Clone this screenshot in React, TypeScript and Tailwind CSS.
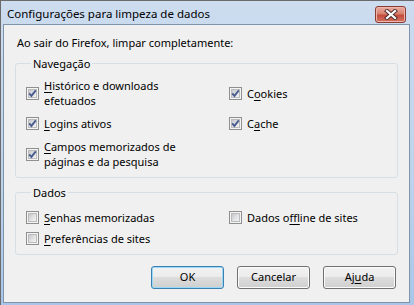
import React from 'react';

const FONT = "font-['Noto_Sans',sans-serif]";

const CheckBox = ({ checked }: { checked?: boolean }) => (
  <div className="w-[13px] h-[13px] shrink-0 border border-[#8f8f8f] bg-[#f4f4f4] p-px">
    <div className="w-full h-full border border-[#bcbcbc] bg-[linear-gradient(135deg,#c4c6ca_0%,#e2e3e5_55%,#f3f3f3_100%)] flex items-center justify-center">
      {checked && (
        <svg width="9" height="9" viewBox="0 0 9 9" className="-m-px">
          <path d="M1.2 4.4 L3.4 6.9 L7.8 1.4" fill="none" stroke="#4a5d90" strokeWidth="1.9" />
        </svg>
      )}
    </div>
  </div>
);

// label with an access key underlined
const Label = ({ pre = '', k, post }: { pre?: string; k: string; post: string }) => (
  <span>
    {pre}
    <span className="underline underline-offset-[2px]">{k}</span>
    {post}
  </span>
);

const Option = ({ checked, children }: { checked?: boolean; children: React.ReactNode }) => (
  <div className="flex items-center gap-[5px]">
    <CheckBox checked={checked} />
    <div className="leading-[15px]">{children}</div>
  </div>
);

const Button = ({ children, primary }: { children: React.ReactNode; primary?: boolean }) => (
  <button
    className={`w-[73px] h-[23px] rounded-[3px] border text-[11px] text-black bg-[linear-gradient(to_bottom,#f2f2f2_0%,#ebebeb_50%,#dddddd_50%,#cfcfcf_100%)] ${
      primary
        ? 'border-[#3c7fb1] shadow-[inset_0_0_0_1px_#9ad9f6]'
        : 'border-[#707070] shadow-[inset_0_0_0_1px_#fbfbfb]'
    }`}
  >
    {children}
  </button>
);

const CloseButton = () => (
  <div className="w-[31px] h-[17px] mt-[5px] mr-[4px] self-start rounded-[3px] border border-[#8b3a34] bg-[linear-gradient(to_bottom,#e9aca2_0%,#d7806f_45%,#c44c3c_55%,#d27260_100%)] shadow-[inset_0_0_0_1px_#ecb6ab] flex items-center justify-center">
    <svg width="14" height="11" viewBox="0 0 14 11">
      <path d="M3 2 L11 9 M11 2 L3 9" stroke="#4b2a2a" strokeWidth="4" strokeLinecap="square" />
      <path d="M3 2 L11 9 M11 2 L3 9" stroke="#ffffff" strokeWidth="2.2" strokeLinecap="square" />
    </svg>
  </div>
);

export default function App() {
  return (
    <div className={`${FONT} w-[414px] h-[305px] flex flex-col border-l border-t border-[#6b6b6b] bg-[linear-gradient(to_bottom,#cddcef_0%,#bcd2ea_60%,#a9c6e8_100%)] pl-[2px] pr-[4px] pb-[2px] text-[11px] text-black`}>
      {/* title bar */}
      <div className="h-[23px] flex items-center justify-between">
        <span className="pl-[4px] pt-px leading-[15px] text-[11.5px] text-black">Configurações para limpeza de dados</span>
        <CloseButton />
      </div>

      {/* client area */}
      <div className="flex-1 border border-[#7f93ad] bg-[#f0f0f0] flex flex-col">
        <p className="pl-[13px] pt-[10px] leading-[15px]">Ao sair do Firefox, limpar completamente:</p>

        <fieldset className="w-[383px] ml-[11px] mt-[6px] border border-[#d5dfe5] rounded-[3px] pl-[10px] pt-[7px] pb-[8px]">
          <legend className="ml-[5px] px-[2px] leading-[15px]">Navegação</legend>
          <div className="grid grid-cols-[203px_1fr] gap-y-[8px] items-center">
            <Option checked>
              <div><Label k="H" post="istórico e downloads" /></div>
              <div>efetuados</div>
            </Option>
            <Option checked>
              <Label pre="C" k="o" post="okies" />
            </Option>
            <Option checked>
              <Label k="L" post="ogins ativos" />
            </Option>
            <Option checked>
              <Label pre="C" k="a" post="che" />
            </Option>
            <Option checked>
              <div><Label k="C" post="ampos memorizados de" /></div>
              <div>páginas e da pesquisa</div>
            </Option>
          </div>
        </fieldset>

        <fieldset className="w-[383px] ml-[11px] mt-[7px] border border-[#d5dfe5] rounded-[3px] pl-[10px] pt-[10px] pb-[8px]">
          <legend className="ml-[5px] px-[2px] leading-[15px]">Dados</legend>
          <div className="grid grid-cols-[203px_1fr] gap-y-[6px] items-center">
            <Option>
              <Label k="S" post="enhas memorizadas" />
            </Option>
            <Option>
              <Label pre="Dados o" k="f" post="fline de sites" />
            </Option>
            <Option>
              <Label k="P" post="referências de sites" />
            </Option>
          </div>
        </fieldset>

        <div className="mt-[11px] pr-[13px] flex justify-end gap-[13px]">
          <Button primary>OK</Button>
          <Button>Cancelar</Button>
          <Button>
            <Label pre="Aj" k="u" post="da" />
          </Button>
        </div>
      </div>
    </div>
  );
}
